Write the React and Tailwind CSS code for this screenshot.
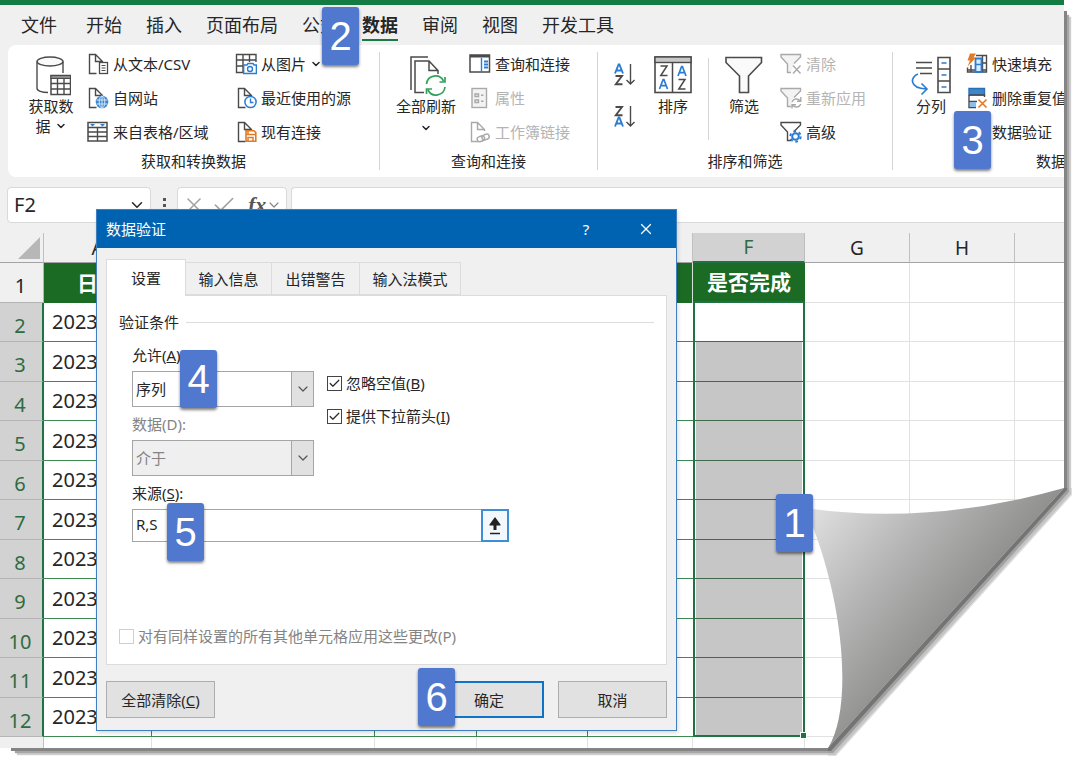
import React from 'react';
import { ChevronDown, X, Check } from 'lucide-react';

const MENU = ['开始', '插入', '页面布局', '公式', '数据', '审阅', '视图', '开发工具'];

const INK = '#4a4a4a';
const BLUE = '#2b7cd3';

function Svg({ w = 22, h = 22, children }) {
  return (
    <svg width={w} height={h} viewBox={`0 0 ${w} ${h}`} fill="none" className="shrink-0" aria-hidden="true">
      {children}
    </svg>
  );
}

function Page({ color = INK }) {
  return <path d="M9.5 20.500H2.500V1.500H8.500L15.500 8.500V10M8.500 1.500V8.500H15.500" stroke={color} strokeWidth="1.4" />;
}

const DatabaseIcon = () => (
  <Svg w={40} h={40}>
    <g transform="translate(3 0)">
      <path d="M3 5.500V32.500C3 34.700 8 36.500 14 36.500M29 5.500V17" stroke={INK} strokeWidth="1.4" />
      <ellipse cx="16" cy="5.500" rx="13" ry="4.500" fill="#fafafa" stroke={INK} strokeWidth="1.4" />
      <rect x="17" y="19.500" width="19.500" height="19" fill="#fff" stroke={INK} strokeWidth="1.5" />
      <rect x="17" y="19.500" width="19.500" height="3" fill="#8a8a8a" stroke={INK} />
      <path d="M17 27.500H36.500M17 33H36.500M23.500 22V38.500M30 22V38.500" stroke={INK} strokeWidth="1.4" />
    </g>
  </Svg>
);

const TextFileIcon = () => (
  <Svg>
    <Page />
    <rect x="12.500" y="9.500" width="8" height="11" fill="#fff" stroke={INK} strokeWidth="1.3" />
    <path d="M14.500 12.500H18.500M14.500 15H18.500M14.500 17.500H18.500" stroke={INK} />
  </Svg>
);

const WebIcon = () => (
  <Svg>
    <Page />
    <circle cx="15" cy="15" r="6.300" fill="#3a86cf" />
    <path d="M9.500 13H20.500M9.500 17H20.500M15 9V21" stroke="#d6e8f8" />
    <ellipse cx="15" cy="15" rx="2.800" ry="6" stroke="#d6e8f8" />
  </Svg>
);

const TableIcon = () => (
  <Svg>
    <rect x="1" y="1.500" width="19" height="18.500" stroke={INK} strokeWidth="1.5" />
    <path d="M1 6.500H20M1 11H20M1 15.500H20M10.500 6.500V20" stroke={INK} strokeWidth="1.4" />
    <path d="M3 3H8L5.500 5.500ZM13 3H18L15.500 5.500Z" fill={BLUE} />
  </Svg>
);

const PictureIcon = () => (
  <Svg>
    <path d="M8 19.500H1.500V1.500H21V9M1.500 7H21M1.500 13H8M8 1.500V19.500M14.500 1.500V9" stroke={INK} strokeWidth="1.4" />
    <path d="M8.700 12H12L13 10.500H18L19 12H21.400V20.500H8.700Z" fill="#fff" stroke={BLUE} strokeWidth="1.4" />
    <circle cx="15" cy="16" r="2.500" stroke={BLUE} strokeWidth="1.4" />
  </Svg>
);

const RecentIcon = () => (
  <Svg>
    <g transform="translate(1 0)"><Page /></g>
    <circle cx="15.500" cy="15" r="5.600" fill="#fff" stroke={BLUE} strokeWidth="1.500" />
    <path d="M15.500 11.500V15.500H18.500" stroke={BLUE} strokeWidth="1.400" />
  </Svg>
);

const ConnectionIcon = () => (
  <Svg>
    <g transform="translate(1 0)"><Page /></g>
    <path d="M11 9.700H19L20.800 11.500V20.300H11Z" fill="#fff" stroke="#e07b28" strokeWidth="1.600" />
    <path d="M11 13.500H20.500M13 20V16.500H18V20M13 10V13" stroke="#e07b28" strokeWidth="1.500" />
  </Svg>
);

const RefreshIcon = () => (
  <Svg w={40} h={40}>
    <path d="M5 34V1H22" stroke={INK} strokeWidth="1.5" />
    <path d="M18 36.500H9V5H23L32 14.500V18M23 5V14.500H32" stroke={INK} strokeWidth="1.500" />
    <path d="M20.500 28A9 9 0 0 1 37.500 25M39 21V26H33.500M39 31A9 9 0 0 1 22 34M20.500 38V33H26" stroke="#35a05a" strokeWidth="1.700" />
  </Svg>
);

const QueriesIcon = () => (
  <Svg>
    <rect x="1" y="2" width="19.500" height="17" stroke={INK} strokeWidth="1.500" />
    <rect x="1" y="2" width="19.500" height="2.500" fill={INK} />
    <path d="M12.500 5V18.500" stroke={BLUE} strokeWidth="1.400" />
    <path d="M15 8.500H19M15 11.500H19M15 14.500H19" stroke={BLUE} strokeWidth="2" />
  </Svg>
);

const PropertiesIcon = () => (
  <Svg>
    <rect x="3" y="1.500" width="14.500" height="19" fill="#f3f3f3" stroke="#a9a9a9" strokeWidth="1.400" />
    <path d="M6 7H9.500V9.500H6ZM6 13H9.500V15.500H6ZM12 8.200H14.500M12 14.200H14.500" stroke="#a9a9a9" strokeWidth="1.400" />
  </Svg>
);

const LinkFileIcon = () => (
  <Svg>
    <Page color="#a9a9a9" />
    <g transform="rotate(-20 14 17)" stroke="#a9a9a9" strokeWidth="1.500">
      <rect x="8" y="14.500" width="7.500" height="5" rx="2.500" fill="#fff" />
      <rect x="13" y="14.500" width="7.500" height="5" rx="2.500" />
    </g>
  </Svg>
);

function SortOrderIcon({ down }) {
  const a = 'M0 9.500L3.600 0.500H4.400L8 9.500M1.300 6.500H6.700';
  const z = 'M0.500 1H7L0.800 9.300H7.500';
  return (
    <Svg w={24} h={26}>
      <path d={down ? a : z} transform="translate(3 2)" stroke={down ? BLUE : INK} strokeWidth="1.900" />
      <path d={down ? z : a} transform="translate(3 13)" stroke={down ? INK : BLUE} strokeWidth="1.900" />
      <path d="M18.500 2V22M14.500 18L18.500 22L22.500 18" stroke={INK} strokeWidth="1.400" />
    </Svg>
  );
}

const SortIcon = () => (
  <Svg w={40} h={40}>
    <rect x="2" y="1" width="36" height="35.500" fill="#fff" stroke={INK} strokeWidth="1.600" />
    <rect x="2" y="1" width="36" height="5.500" fill="#c8c8c8" stroke={INK} strokeWidth="1.400" />
    <path d="M19.500 6.500V36.500" stroke={INK} strokeWidth="1.500" />
    <path d="M7.500 10H14L7.800 19.500H14.500M25.500 23.500H32L25.800 33H32.500" stroke={INK} strokeWidth="1.500" />
    <path d="M6.500 33L10.100 23.500H10.900L14.500 33M7.900 29.700H13.100M25 20L28.600 10.500H29.400L33 20M26.400 16.700H31.600" stroke={BLUE} strokeWidth="1.700" />
  </Svg>
);

const FilterIcon = () => (
  <Svg w={40} h={40}>
    <path d="M2 1.500H37.500V6.500L24.500 20V36.500H15.500V20L2 6.500Z" fill="#fafafa" stroke={INK} strokeWidth="1.600" />
  </Svg>
);

function SmallFilter({ color, children }) {
  return (
    <Svg>
      <path d="M11 19.500H7.500V11L1 4V1.500H20.500V4L14 10.500" fill={color === INK ? '#fff' : '#f3f3f3'} stroke={color} strokeWidth="1.400" />
      {children}
    </Svg>
  );
}

const ClearIcon = () => (
  <SmallFilter color="#a9a9a9">
    <path d="M13 12.500L20.500 20.500M20.500 12.500L13 20.500" stroke="#a9a9a9" strokeWidth="1.400" />
  </SmallFilter>
);
const ReapplyIcon = () => (
  <SmallFilter color="#a9a9a9">
    <path d="M12 15A4.800 4.800 0 0 1 20 13.500M20.800 10V14.200H17M20.800 17A4.800 4.800 0 0 1 12.800 18.500M12 21.500V17.700H16" stroke="#a9a9a9" strokeWidth="1.400" />
  </SmallFilter>
);
const AdvancedIcon = () => (
  <SmallFilter color={INK}>
    <circle cx="15.500" cy="15.500" r="3.300" fill="#fff" stroke={BLUE} strokeWidth="2" />
    <circle cx="15.500" cy="15.500" r="5.200" stroke={BLUE} strokeWidth="2" strokeDasharray="2.700 2.745" />
  </SmallFilter>
);

const SplitIcon = () => (
  <Svg w={42} h={40}>
    <path d="M6 6.500H22M6 12H22M10 17.500H22" stroke={INK} strokeWidth="1.500" />
    <path d="M8 18C0 21 -1 32 16 33M11.500 27.500L17 33L11.500 38.500" stroke={BLUE} strokeWidth="1.600" />
    <path d="M28 1.500H40V36.500H28ZM28 13H40M28 25H40" stroke={INK} strokeWidth="1.600" />
    <path d="M31.500 7H36.500M31.500 19H36.500M31.500 31H36.500" stroke={BLUE} strokeWidth="1.600" />
  </Svg>
);

const FlashFillIcon = () => (
  <Svg>
    <path d="M10 2.500H20.500V19H1.500V14.500M1.500 17H20.500M14 10H20.500M16.500 2.500V19M5 12V19" stroke={INK} strokeWidth="1.400" />
    <path d="M9.500 5.500H15.500V19H9.500Z" fill="#dcebfa" stroke={BLUE} strokeWidth="1.800" />
    <path d="M9.500 11.500H15.500" stroke={BLUE} strokeWidth="1.400" />
    <path d="M4 0.500H10L7.500 4.500H10L1.500 13.500L4 7.500H1.500Z" fill="#e07b28" />
  </Svg>
);

const DuplicatesIcon = () => (
  <Svg>
    <path d="M3 1.500H18.500V8H3Z" fill="#3d86cc" stroke="#2a6fb5" strokeWidth="1.400" />
    <path d="M3 8H18.500V10M3 8V20.500H10M3 14.500H11" stroke={INK} strokeWidth="1.400" />
    <path d="M4 15H10V20H4Z" fill="#8dbdea" />
    <path d="M12.500 12.500L20.500 20.500M20.500 12.500L12.500 20.500" stroke="#e07b28" strokeWidth="1.700" />
  </Svg>
);

const ValidationIcon = () => (
  <Svg>
    <rect x="2" y="2" width="16" height="7" stroke={INK} strokeWidth="1.400" />
    <path d="M5 16L9 20L18 12" stroke="#35a05a" strokeWidth="1.600" />
  </Svg>
);

function Tool({ icon, children, disabled }) {
  return (
    <button type="button" disabled={disabled} className="flex h-[34px] items-center gap-1 whitespace-nowrap text-[15px] disabled:text-[#b4b4b4]">
      {icon}
      <span className="flex items-center">{children}</span>
    </button>
  );
}

function BigTool({ icon, children }) {
  return (
    <button type="button" className="flex w-[66px] shrink-0 flex-col items-center pt-[9px] text-[15px] leading-5">
      {icon}
      {children}
    </button>
  );
}

function Group({ title, className, children }) {
  return (
    <section aria-label={title} className={`flex shrink-0 flex-col pt-[2px] ${className}`}>
      <div className="flex h-[103px] items-start">{children}</div>
      <div className="whitespace-nowrap text-center text-[15px] leading-[22px]">{title}</div>
    </section>
  );
}

function GroupRule() {
  return <div className="my-[7px] w-px shrink-0 bg-[#d4d4d4]" />;
}

function Ribbon() {
  return (
    <div className="ml-2 flex h-[132px] overflow-hidden rounded-l-lg bg-white">
      <Group title="获取和转换数据" className="w-[371px]">
        <div className="pl-[10px]">
          <BigTool icon={<DatabaseIcon />}>
            <span>获取数</span>
            <span className="flex items-center gap-1">据<ChevronDown size={12} strokeWidth={3} /></span>
          </BigTool>
        </div>
        <div className="ml-[3px] w-[148px]">
          <Tool icon={<TextFileIcon />}>从文本/CSV</Tool>
          <Tool icon={<WebIcon />}>自网站</Tool>
          <Tool icon={<TableIcon />}>来自表格/区域</Tool>
        </div>
        <div>
          <Tool icon={<PictureIcon />}>从图片<ChevronDown size={12} strokeWidth={3} className="ml-1" /></Tool>
          <Tool icon={<RecentIcon />}>最近使用的源</Tool>
          <Tool icon={<ConnectionIcon />}>现有连接</Tool>
        </div>
      </Group>
      <GroupRule />
      <Group title="查询和连接" className="w-[217px]">
        <div className="pl-[13px]">
          <BigTool icon={<RefreshIcon />}>
            <span>全部刷新</span>
            <ChevronDown size={12} strokeWidth={3} className="mt-[6px]" />
          </BigTool>
        </div>
        <div className="ml-[10px]">
          <Tool icon={<QueriesIcon />}>查询和连接</Tool>
          <Tool icon={<PropertiesIcon />} disabled>属性</Tool>
          <Tool icon={<LinkFileIcon />} disabled>工作簿链接</Tool>
        </div>
      </Group>
      <GroupRule />
      <Group title="排序和筛选" className="w-[294px]">
        <div className="flex flex-col gap-4 pl-[14px] pt-[15px]">
          <button type="button" aria-label="升序"><SortOrderIcon down /></button>
          <button type="button" aria-label="降序"><SortOrderIcon /></button>
        </div>
        <div className="pl-[4px]">
          <BigTool icon={<SortIcon />}><span>排序</span></BigTool>
        </div>
        <div className="ml-[2px] mt-[11px] h-[82px] w-px bg-[#d4d4d4]" />
        <div className="pl-[2px]">
          <BigTool icon={<FilterIcon />}><span>筛选</span></BigTool>
        </div>
        <div className="pl-[3px]">
          <Tool icon={<ClearIcon />} disabled>清除</Tool>
          <Tool icon={<ReapplyIcon />} disabled>重新应用</Tool>
          <Tool icon={<AdvancedIcon />}>高级</Tool>
        </div>
      </Group>
      <GroupRule />
      <Group title="数据工具" className="w-[346px]">
        <div className="pl-[5px]">
          <BigTool icon={<SplitIcon />}><span>分列</span></BigTool>
        </div>
        <div className="ml-[2px]">
          <Tool icon={<FlashFillIcon />}>快速填充</Tool>
          <Tool icon={<DuplicatesIcon />}>删除重复值</Tool>
          <Tool icon={<ValidationIcon />}>数据验证</Tool>
        </div>
      </Group>
    </div>
  );
}

function FormulaBar() {
  return (
    <div className="mt-[10px] flex h-9 pl-[7px]">
      <div className="flex w-[144px] items-center justify-between rounded border border-[#d9d9d9] bg-white pl-[6px] pr-1 text-xl">
        <input aria-label="名称框" defaultValue="F2" className="w-20 bg-transparent outline-none" />
        <ChevronDown size={18} strokeWidth={2} />
      </div>
      <div className="flex w-[26px] flex-col items-center justify-center gap-[3px]">
        <i className="size-[3px] bg-[#555]" />
        <i className="size-[3px] bg-[#555]" />
        <i className="size-[3px] bg-[#555]" />
      </div>
      <div className="flex w-[110px] items-center rounded border border-[#d9d9d9] bg-white pl-1">
        <button type="button" aria-label="取消输入" className="text-[#a0a0a0]"><X size={24} strokeWidth={1.500} /></button>
        <button type="button" aria-label="输入" className="ml-[5px] text-[#a0a0a0]"><Check size={26} strokeWidth={1.500} /></button>
        <button type="button" aria-label="插入函数" className="ml-[11px] flex items-center font-['Liberation_Serif',serif] text-[22px] font-bold italic leading-6 text-[#555]">
          fx<ChevronDown size={16} strokeWidth={1.800} className="text-[#888]" />
        </button>
      </div>
      <input aria-label="编辑栏" className="ml-1 min-w-0 flex-1 rounded-l border border-r-0 border-[#d9d9d9] bg-white outline-none" />
    </div>
  );
}

const ROWS = [1, 2, 3, 4, 5, 6, 7, 8, 9, 10, 11, 12];

function HeaderCell({ children, className = 'border-r border-[#c0c0c0] border-b-[#a3a3a3]' }) {
  return <th className={`border-b font-normal ${className}`}>{children}</th>;
}

function Grid() {
  const green = 'border-b border-r border-[#3c8a52]';
  const plain = 'border-b border-r border-[#e1e1e1]';
  return (
    <table className="mt-[10px] w-full table-fixed border-separate border-spacing-0 bg-white leading-7">
      <colgroup>
        <col className="w-[44px]" /><col className="w-[108px]" /><col className="w-[223px]" /><col className="w-[102px]" />
        <col className="w-[111px]" /><col className="w-[105px]" /><col className="w-[112px]" /><col className="w-[105px]" />
        <col className="w-[105px]" /><col />
      </colgroup>
      <thead className="bg-[#f0f0f0] text-[19px]">
        <tr className="h-[30px]">
          <HeaderCell>
            <svg width="22" height="22" viewBox="0 0 22 22" className="ml-[18px]" aria-hidden="true"><path d="M22 0V22H0Z" fill="#b7b7b7" /></svg>
          </HeaderCell>
          <HeaderCell>A</HeaderCell><HeaderCell>B</HeaderCell><HeaderCell>C</HeaderCell><HeaderCell>D</HeaderCell><HeaderCell>E</HeaderCell>
          <HeaderCell className="border-r border-[#bdbdbd] border-b-2 border-b-[#1f7244] bg-[#d2d2d2] text-[#2f6b41]">F</HeaderCell>
          <HeaderCell>G</HeaderCell><HeaderCell>H</HeaderCell><HeaderCell className="border-[#a3a3a3]" />
        </tr>
      </thead>
      <tbody>
        {ROWS.map((n) => (
          <tr key={n} className="odd:h-10 even:h-[39px]">
            <th className={n === 1
              ? 'border-b border-r border-[#b5b5b5] bg-[#f0f0f0] pr-[2px] pt-[7px] text-xl font-normal'
              : 'border-b border-r-2 border-b-[#b5b5b5] border-r-[#1f7244] bg-[#d2d2d2] pr-[2px] pt-[7px] text-xl font-normal text-[#2f6b41]'}>
              {n}
            </th>
            {n === 1 ? (
              <>
                <td className="bg-[#1b6b25] text-center text-[21px] font-bold text-white">日期</td>
                <td className="bg-[#1b6b25]" /><td className="bg-[#1b6b25]" /><td className="bg-[#1b6b25]" />
                <td className="border-r border-[#d5e5d8] bg-[#1b6b25]" />
                <td className="border-b-2 border-[#1f7244] bg-[#1b6b25] text-center text-[21px] font-bold text-white">是否完成</td>
              </>
            ) : (
              <>
                <td className={`${green} overflow-hidden pl-2 text-xl`}>2023</td>
                <td className={green} /><td className={green} /><td className={green} />
                <td className="border-b border-[#3c8a52]" />
                <td className={`relative border-x-2 border-[#1f7244] shadow-[inset_1px_0_#fff,inset_-1px_0_#fff] ${n === 12 ? 'border-b-2' : 'border-b border-b-[#3f6b4c]'} ${n === 2 ? 'bg-white' : 'bg-[#c6c6c6]'}`}>
                  {n === 12 && <span className="absolute -bottom-1 -right-1 z-10 size-[7px] border border-white bg-[#1f7244]" />}
                </td>
              </>
            )}
            <td className={plain} /><td className={plain} /><td className="border-b border-[#e1e1e1]" />
          </tr>
        ))}
        <tr className="h-[11px]">
          <th className="border-r border-[#c0c0c0] bg-[#f0f0f0]" />
          {['A', 'B', 'C', 'D', 'E', 'F', 'G', 'H'].map((c) => <td key={c} className="border-r border-[#e1e1e1]" />)}
          <td />
        </tr>
      </tbody>
    </table>
  );
}

function SelectBox({ id, value, disabled }) {
  return (
    <div className="relative h-9">
      <select id={id} disabled={disabled} className="size-full appearance-none border border-[#a5a5a5] bg-white pl-[3px] text-[15px] opacity-100 outline-none disabled:bg-[#efefef] disabled:text-[#848484]">
        <option>{value}</option>
      </select>
      <span className="pointer-events-none absolute inset-y-0 right-0 flex w-[23px] items-center justify-center border border-[#a5a5a5] bg-[#e1e1e1] text-[#555]">
        <ChevronDown size={16} strokeWidth={1.800} />
      </span>
    </div>
  );
}

function Tick({ id, children, checked, disabled }) {
  return (
    <div className="flex h-5 items-center gap-1">
      <span className="relative flex size-[15px] shrink-0">
        <input id={id} type="checkbox" defaultChecked={checked} disabled={disabled} className="peer size-full appearance-none border border-[#444] bg-white disabled:border-[#cfcfcf]" />
        <Check size={13} strokeWidth={2.200} className="pointer-events-none absolute left-px top-px hidden peer-checked:block" />
      </span>
      <label htmlFor={id} className={disabled ? 'whitespace-nowrap text-[#848484]' : 'whitespace-nowrap'}>{children}</label>
    </div>
  );
}

const TAB = 'h-[33px] border border-l-0 border-[#dcdcdc] bg-[#f0f0f0]';
const BUTTON = 'h-[37px] border border-[#adadad] bg-[#e1e1e1]';

function Dialog() {
  return (
    <div role="dialog" aria-labelledby="dialog-title" className="absolute left-24 top-[209px] w-[581px] border border-[#3f7fc0] bg-[#f0f0f0] text-[15px] leading-5 shadow-[1px_2px_4px_rgba(0,0,0,0.15)]">
      <div className="flex h-[38px] items-center bg-[#0063b1] pl-[9px] text-white">
        <h2 id="dialog-title" className="flex-1">数据验证</h2>
        <button type="button" aria-label="帮助" className="w-[60px]">?</button>
        <button type="button" aria-label="关闭" className="flex w-[60px] justify-center"><X size={18} strokeWidth={1.600} /></button>
      </div>
      <div className="px-[9px] pb-3 pt-[11px]">
        <div role="tablist" className="flex items-end">
          <button type="button" role="tab" aria-selected="true" className="relative -mb-px h-[37px] w-20 border border-b-0 border-[#dcdcdc] bg-white">设置</button>
          <button type="button" role="tab" aria-selected="false" className={`${TAB} w-[86px]`}>输入信息</button>
          <button type="button" role="tab" aria-selected="false" className={`${TAB} w-[88px]`}>出错警告</button>
          <button type="button" role="tab" aria-selected="false" className={`${TAB} w-[101px]`}>输入法模式</button>
        </div>
        <div role="tabpanel" className="border border-[#dcdcdc] bg-white px-3 pb-[18px] pt-4">
          <div role="group" aria-labelledby="criteria">
            <div className="flex items-center gap-[7px]">
              <span id="criteria">验证条件</span>
              <span className="h-px flex-1 bg-[#dcdcdc]" />
            </div>
            <div className="mt-[13px] flex gap-[13px] pl-[13px]">
              <div className="w-[182px]">
                <label htmlFor="allow" className="mb-[6px] block">允许(<u>A</u>):</label>
                <SelectBox id="allow" value="序列" />
                <label htmlFor="data" className="mb-[6px] mt-[7px] block text-[#848484]">数据(D):</label>
                <SelectBox id="data" value="介于" disabled />
              </div>
              <div className="flex flex-col gap-[13px] pt-7">
                <Tick id="ignore" checked>忽略空值(<u>B</u>)</Tick>
                <Tick id="arrow" checked>提供下拉箭头(<u>I</u>)</Tick>
              </div>
            </div>
            <div className="pl-[13px] pt-[7px]">
              <label htmlFor="source" className="mb-[6px] block">来源(<u>S</u>):</label>
              <div className="flex h-[33px] w-[377px]">
                <input id="source" defaultValue="R,S" className="min-w-0 flex-1 border border-r-0 border-[#a5a5a5] pb-1 pl-[3px] outline-none" />
                <button type="button" aria-label="选择区域" className="flex w-7 items-center justify-center border-2 border-[#3c8fd6] bg-[#f3f8fd]">
                  <svg width="14" height="20" viewBox="0 0 14 20" aria-hidden="true">
                    <path d="M7 1L12.500 8.500V9.500H8.500V14H5.500V9.500H1.500V8.500Z" fill="#222" /><path d="M2 17.500H12" stroke="#222" strokeWidth="1.500" />
                  </svg>
                </button>
              </div>
            </div>
          </div>
          <div className="mt-[84px]">
            <Tick id="apply" disabled>对有同样设置的所有其他单元格应用这些更改(P)</Tick>
          </div>
        </div>
        <div className="mt-4 flex">
          <button type="button" className={`${BUTTON} w-[109px]`}>全部清除(<u>C</u>)</button>
          <button type="button" className="ml-auto h-[37px] w-[110px] border-2 border-[#0f74c8] bg-[#e1e1e1]">确定</button>
          <button type="button" className={`${BUTTON} ml-[14px] w-[109px]`}>取消</button>
        </div>
      </div>
    </div>
  );
}

function PageCurl() {
  return (
    <svg width="280" height="284" viewBox="0 0 280 284" className="absolute bottom-0 right-0" aria-hidden="true">
      <defs>
        <linearGradient id="curl" gradientUnits="userSpaceOnUse" x1="12" y1="32" x2="150" y2="150">
          <stop offset="0" stopColor="#dfdfdf" />
          <stop offset="0.500" stopColor="#b4b5b4" />
          <stop offset="1" stopColor="#8e8f8d" />
        </linearGradient>
      </defs>
      <path d="M264 8H280V284H28V268Z" fill="#fff" />
      <path d="M264 8H272V15L36 276H28V268Z" fill="#dedede" />
      <path d="M264 8H271V14L35 275H28V268Z" fill="#c4c4c4" />
      <path d="M264 8H269V12L33 273H28V268Z" fill="#a0a0a0" />
      <path d="M264 8H267V10L31 271H28V268Z" fill="#747474" />
      <path d="M5 28Q130 46 264 8L28 268C55 225 42 110 5 28Z" fill="url(#curl)" />
    </svg>
  );
}

function Step({ className, children }) {
  return (
    <div className={`absolute flex h-[58px] w-[37px] items-center justify-center rounded-[3px] bg-[#5078cf] font-['Liberation_Sans',sans-serif] text-[40px] leading-none text-white shadow-[0_2px_3px_rgba(0,0,0,0.5)] ${className}`}>
      {children}
    </div>
  );
}

export default function App() {
  return (
    <div className="relative min-w-[1000px] bg-white pb-4 pr-4 font-['Noto_Sans','Noto_Sans_CJK_SC',sans-serif] text-[#262626]">
      <div className="relative overflow-hidden bg-[#f0f0f0] shadow-[7px_7px_0_-4px_#848484,10px_10px_1px_-5px_#a6a6a6,12px_12px_1px_-5px_#cdcdcd]">
        <div className="h-[5px] bg-[#137c43]" />
        <nav className="flex h-10 items-center pl-[9px] text-lg leading-6">
          <button type="button" className="w-[65px] pl-3 text-left">文件</button>
          {MENU.map((m) => (
            <button key={m} type="button" className={m === '数据' ? 'relative px-3 font-bold' : 'px-3'}>
              {m}
              {m === '数据' && <span className="absolute inset-x-3 -bottom-1 h-[2px] bg-[#1b7a43]" />}
            </button>
          ))}
        </nav>
        <Ribbon />
        <FormulaBar />
        <Grid />
        <Dialog />
      </div>
      <PageCurl />
      <Step className="left-[776px] top-[494px]">1</Step>
      <Step className="left-[322px] top-[7px]">2</Step>
      <Step className="left-[954px] top-[111px]">3</Step>
      <Step className="left-[180px] top-[350px]">4</Step>
      <Step className="left-[167px] top-[503px]">5</Step>
      <Step className="left-[418px] top-[668px]">6</Step>
    </div>
  );
}
